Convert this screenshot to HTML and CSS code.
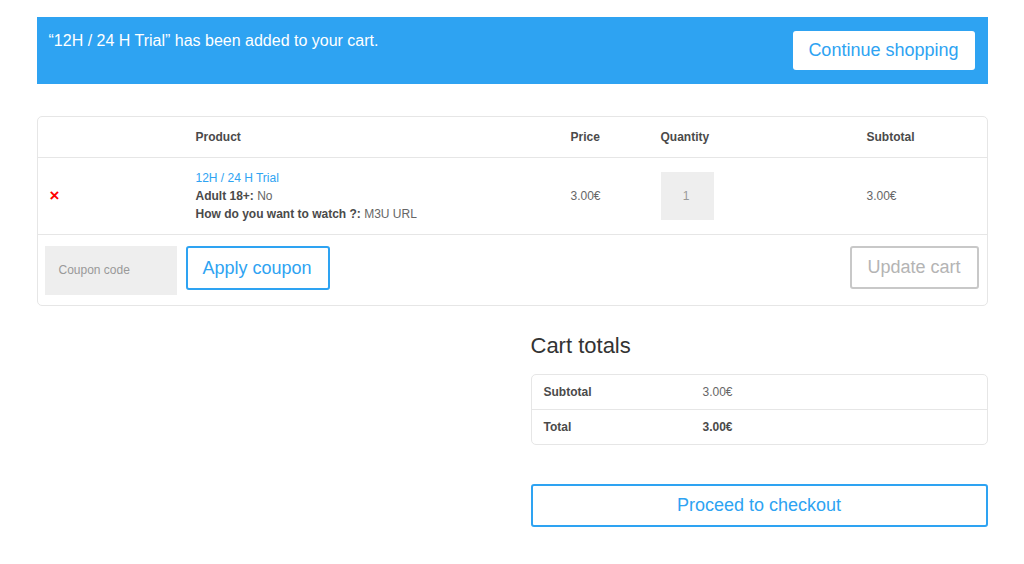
FILE: index.html
```html
<!DOCTYPE html>
<html lang="en">
<head>
<meta charset="utf-8">
<title>Cart</title>
<link rel="stylesheet" href="styles.css">
</head>
<body>
<div class="page">
  <div class="notice">
    <span class="notice-text">“12H / 24 H Trial” has been added to your cart.</span>
    <a class="notice-btn" href="#">Continue shopping</a>
  </div>

  <table class="cart">
    <thead>
      <tr>
        <th class="c-remove"></th>
        <th class="c-product">Product</th>
        <th class="c-price">Price</th>
        <th class="c-qty">Quantity</th>
        <th class="c-sub">Subtotal</th>
      </tr>
    </thead>
    <tbody>
      <tr class="item">
        <td class="c-remove"><a class="remove" href="#">×</a></td>
        <td class="c-product">
          <a class="prod-link" href="#">12H / 24 H Trial</a>
          <div class="meta"><b>Adult 18+:</b> No</div>
          <div class="meta"><b>How do you want to watch ?:</b> M3U URL</div>
        </td>
        <td class="c-price">3.00€</td>
        <td class="c-qty"><div class="qty">1</div></td>
        <td class="c-sub">3.00€</td>
      </tr>
      <tr class="actions">
        <td colspan="5">
          <div class="actions-row">
            <div class="coupon">
              <div class="coupon-input">Coupon code</div>
              <a class="btn btn-blue" href="#">Apply coupon</a>
            </div>
            <a class="btn btn-gray" href="#">Update cart</a>
          </div>
        </td>
      </tr>
    </tbody>
  </table>

  <div class="collaterals">
    <div class="totals">
      <h2 class="totals-title">Cart totals</h2>
      <table class="totals-table">
        <tr><th>Subtotal</th><td>3.00€</td></tr>
        <tr><th>Total</th><td><b>3.00€</b></td></tr>
      </table>
      <a class="btn btn-blue checkout" href="#">Proceed to checkout</a>
    </div>
  </div>
</div>
</body>
</html>
```
FILE: styles.css
```css
html, body {
  margin: 0;
  padding: 0;
  background: #fff;
}
body {
  font-family: "Liberation Sans", Arial, sans-serif;
  color: #666;
  font-size: 12px;
}
a { text-decoration: none; }

.page {
  width: 951px;
  margin: 0 auto;
  padding-top: 17px;
}

.notice {
  background: #2ea3f2;
  display: flex;
  justify-content: space-between;
  align-items: flex-start;
  padding: 14px 13px 14px 12px;
  height: 39px;
}
.notice-text {
  color: #fff;
  font-size: 16px;
  line-height: 20px;
}
.notice-btn {
  background: #fff;
  color: #2ea3f2;
  font-size: 18px;
  line-height: 39px;
  height: 39px;
  padding: 0 16px 0 15px;
  border-radius: 3px;
}

.cart {
  width: 100%;
  margin-top: 32px;
  border: 1px solid #e6e6e6;
  border-radius: 5px;
  border-collapse: separate;
  border-spacing: 0;
  table-layout: fixed;
}
.cart th {
  text-align: left;
  font-weight: bold;
  color: #4a4a4a;
  font-size: 12px;
  height: 40px;
  padding: 0 12px;
  border-bottom: 1px solid #e6e6e6;
}
.cart td {
  padding: 0 12px;
  vertical-align: middle;
}
.c-remove { width: 122px; }
.c-product { width: 351px; }
.c-price { width: 66px; }
.c-qty { width: 182px; }

.item td {
  height: 76px;
  border-bottom: 1px solid #e6e6e6;
  line-height: 18px;
}
.remove {
  color: #f00;
  font-weight: bold;
  font-size: 17px;
  line-height: 18px;
  display: inline-block;
  margin-top: 1px;
}
.prod-link {
  color: #2ea3f2;
  display: block;
}
.meta { color: #666; }
.meta b { color: #4a4a4a; }

.qty {
  width: 53px;
  height: 48px;
  background: #eee;
  color: #999;
  text-align: center;
  line-height: 48px;
  box-sizing: border-box;
  padding-right: 12px;
  padding-left: 10px;
}

.actions td {
  padding: 11px 8px 10px 7px;
}
.actions-row {
  display: flex;
  justify-content: space-between;
  align-items: flex-start;
}
.coupon {
  display: flex;
  align-items: flex-start;
  gap: 9px;
}
.coupon-input {
  width: 132px;
  height: 49px;
  background: #eee;
  color: #999;
  font-size: 12px;
  line-height: 49px;
  padding-left: 14px;
  box-sizing: border-box;
}
.btn {
  display: inline-block;
  box-sizing: border-box;
  font-size: 18px;
  border: 2px solid;
  border-radius: 3px;
  text-align: center;
}
.btn-blue {
  color: #2ea3f2;
  border-color: #2ea3f2;
  height: 44px;
  line-height: 40px;
  padding: 0 16px 0 15px;
}
.btn-gray {
  color: #b4b4b4;
  border-color: #c8c8c8;
  height: 43px;
  line-height: 39px;
  padding: 0 16px 0 15px;
}

.collaterals {
  display: flex;
  justify-content: flex-end;
}
.totals {
  width: 457px;
  padding-top: 27px;
}
.totals-title {
  margin: 0;
  font-weight: normal;
  font-size: 22px;
  line-height: 26px;
  color: #333;
}
.totals-table {
  width: 100%;
  margin-top: 15px;
  border: 1px solid #e6e6e6;
  border-radius: 5px;
  border-collapse: separate;
  border-spacing: 0;
}
.totals-table th {
  width: 135px;
  text-align: left;
  color: #4a4a4a;
  font-weight: bold;
  padding: 0 12px;
  height: 34px;
}
.totals-table td {
  padding: 0 12px;
  height: 34px;
  color: #666;
}
.totals-table b { color: #4a4a4a; }
.totals-table tr:first-child th,
.totals-table tr:first-child td {
  border-bottom: 1px solid #e6e6e6;
}
.checkout {
  display: block;
  width: 100%;
  margin-top: 39px;
  height: 43px;
  line-height: 39px;
  padding: 0;
}
```
